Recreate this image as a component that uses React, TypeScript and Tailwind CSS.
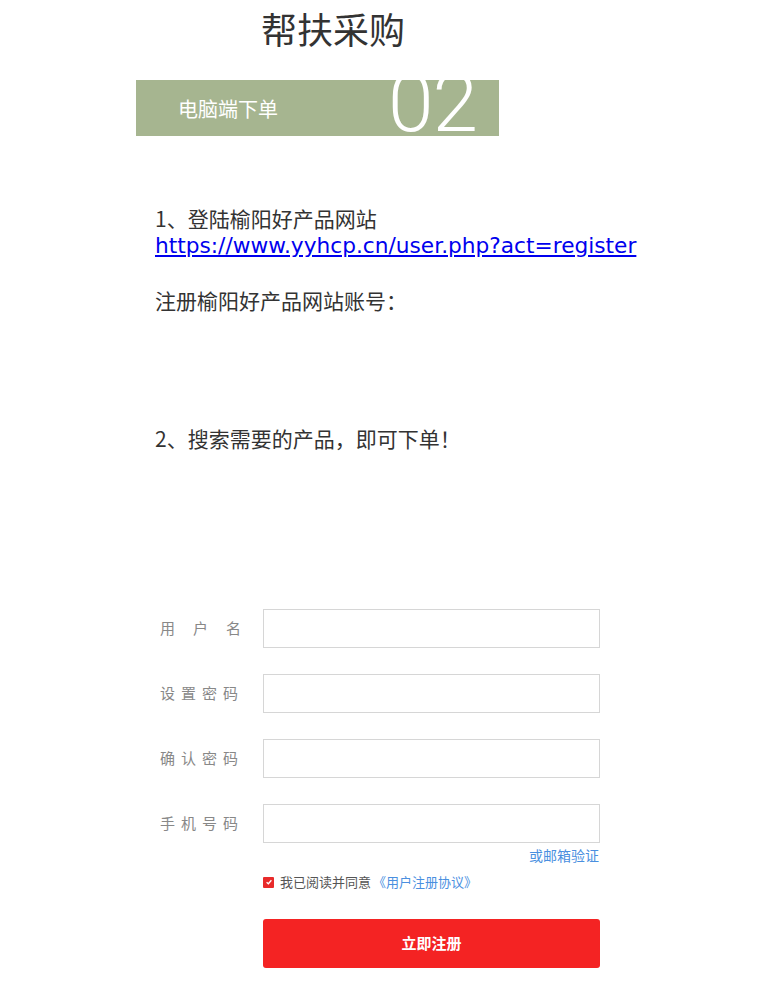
const cjk = "font-['Microsoft_YaHei','Noto_Sans_CJK_SC',sans-serif]";

function Field({ label, wide }: { label: string; wide?: boolean }) {
  return (
    <div className="flex items-center">
      <div
        className={`w-[127px] shrink-0 pl-[24px] text-[15px] text-[#888] ${wide ? "tracking-[18px]" : "tracking-[6px]"}`}
      >
        {label}
      </div>
      <div className="h-[39px] w-[337px] border border-[#d6d6d6] bg-white" />
    </div>
  );
}

export default function App() {
  return (
    <div className={`w-[761px] min-h-[1000px] bg-white ${cjk}`}>
      <h1 className="pl-[261px] pt-[4px] text-[36px] leading-[48px] text-[#333]">帮扶采购</h1>

      <div className="ml-[136px] mt-[28px] flex h-[56px] w-[363px] items-center overflow-hidden bg-[#a6b590]">
        <span className="pl-[42px] pt-[2px] text-[20px] text-white">电脑端下单</span>
        <span className="ml-auto mr-[22px] mt-[-10px] font-['Roboto',sans-serif] text-[82px] font-light leading-none tracking-[-1px] text-white">
          02
        </span>
      </div>

      <div className="pl-[155px] pt-[69px] text-[21px] text-[#333]">
        <p className="leading-[27px]">1、登陆榆阳好产品网站</p>
        <a href="#" className="block font-['DejaVu_Sans',sans-serif] text-[21.7px] leading-[27px] text-[#0000ee] underline">
          https://www.yyhcp.cn/user.php?act=register
        </a>
        <p className="mt-[28px] leading-[27px]">注册榆阳好产品网站账号：</p>
        <p className="mt-[111px] leading-[27px]">2、搜索需要的产品，即可下单！</p>
      </div>

      <div className="mt-[157px] ml-[136px] flex flex-col gap-[26px]">
        <Field label="用户名" wide />
        <Field label="设置密码" />
        <Field label="确认密码" />
        <Field label="手机号码" />
      </div>
      <div className="ml-[239px] flex w-[360px] justify-end pt-[3px] text-[14px] leading-[18px] text-[#4a8fdf]">或邮箱验证</div>
      <div className="ml-[263px] mt-[9px] flex items-center gap-[6px] text-[13px] leading-[18px]">
        <span className="flex h-[11px] w-[11px] items-center justify-center rounded-[1px] bg-[#e82a2a]">
          <svg viewBox="0 0 10 10" className="h-[8px] w-[8px]">
            <path d="M2 5.2 L4.2 7.2 L8 2.8" fill="none" stroke="white" strokeWidth="1.6" />
          </svg>
        </span>
        <span className="text-[#555]">我已阅读并同意</span>
        <span className="-ml-[4px] text-[#4a8fdf]">《用户注册协议》</span>
      </div>
      <button className="ml-[263px] mt-[28px] flex h-[49px] w-[337px] items-center justify-center rounded-[3px] bg-[#f42323] text-[15px] font-bold text-white">
        立即注册
      </button>
    </div>
  );
}
